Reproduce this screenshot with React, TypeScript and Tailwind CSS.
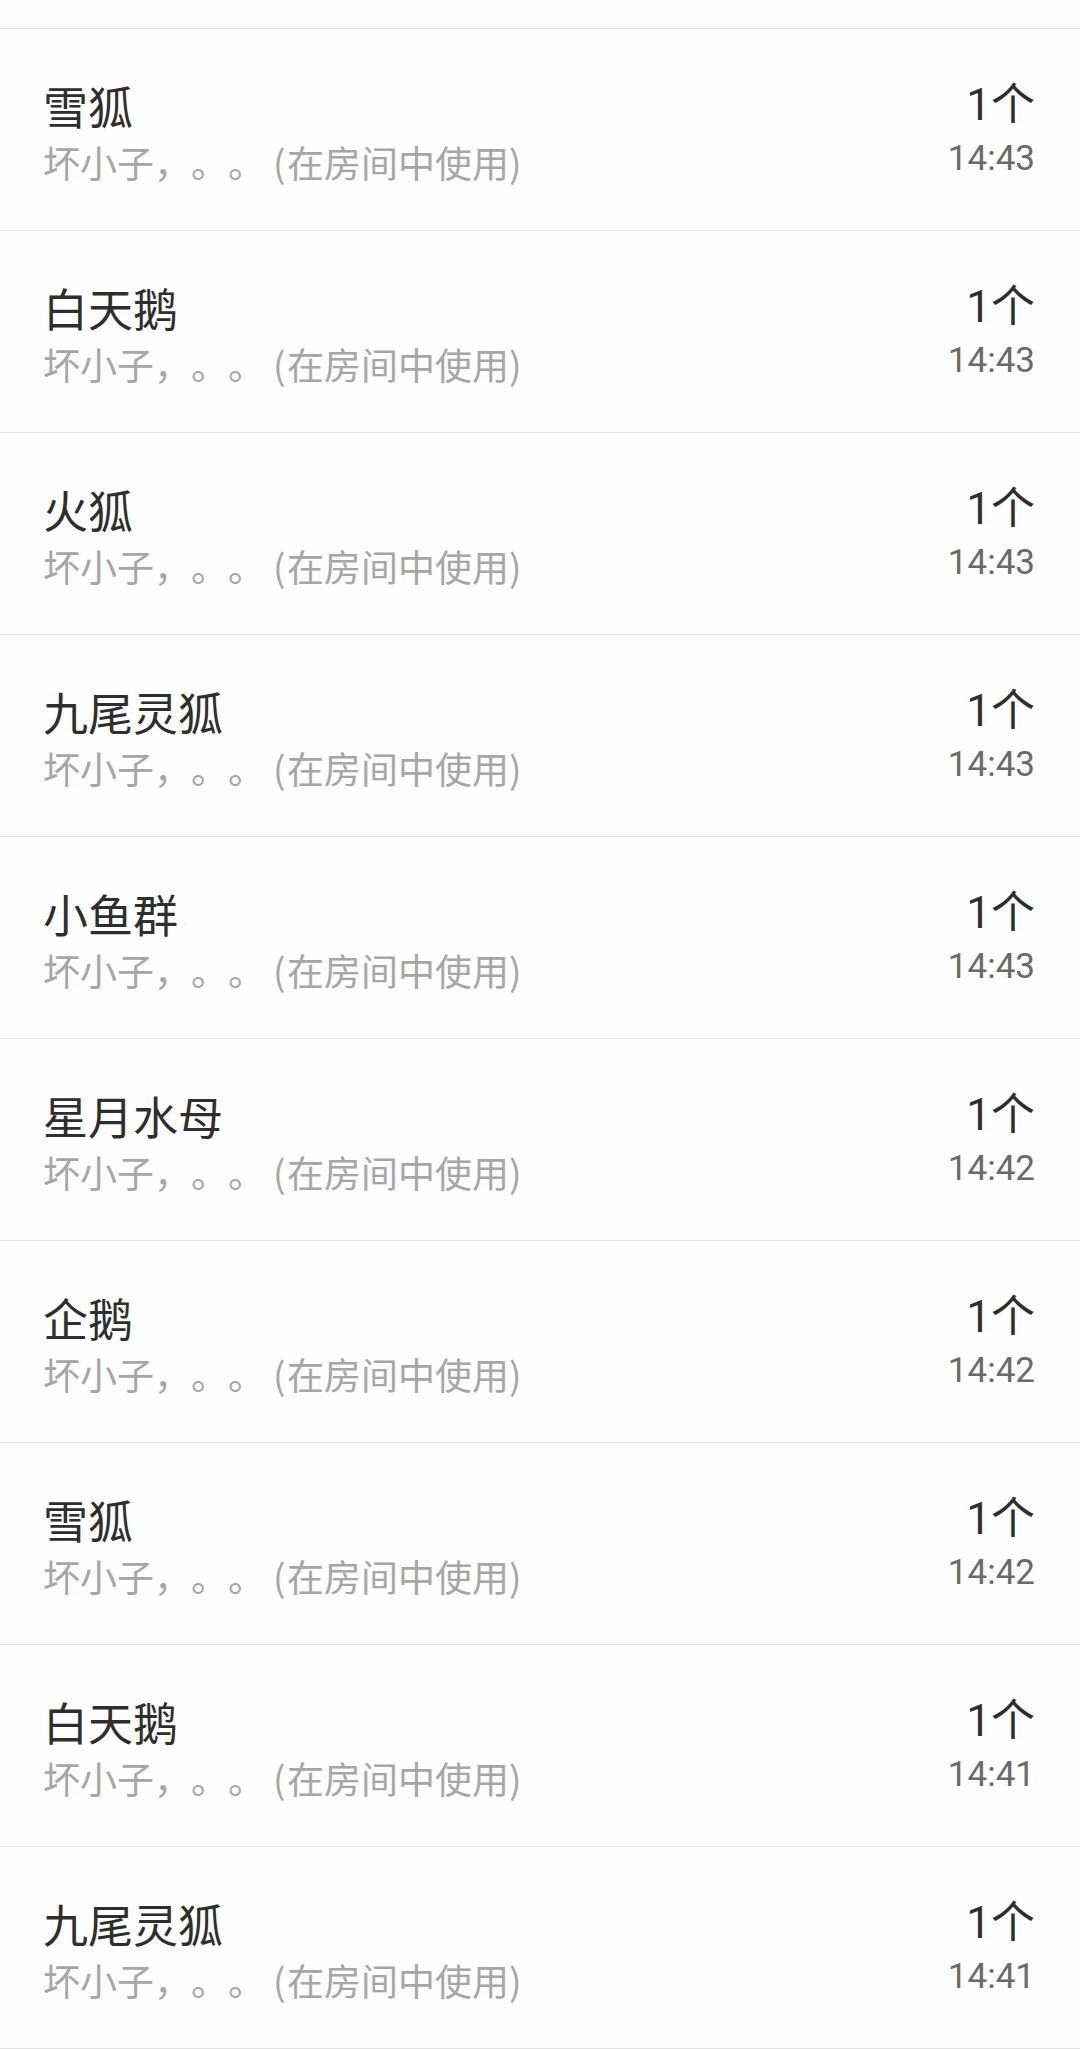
import React from "react";

const rows = [
  { name: "雪狐", time: "14:43" },
  { name: "白天鹅", time: "14:43" },
  { name: "火狐", time: "14:43" },
  { name: "九尾灵狐", time: "14:43" },
  { name: "小鱼群", time: "14:43" },
  { name: "星月水母", time: "14:42" },
  { name: "企鹅", time: "14:42" },
  { name: "雪狐", time: "14:42" },
  { name: "白天鹅", time: "14:41" },
  { name: "九尾灵狐", time: "14:41" },
];

export default function App() {
  return (
    <div
      className="w-[1080px] bg-[#fefefe] pt-[28px] [text-spacing-trim:space-all]"
      style={{ fontFamily: "Roboto, 'Noto Sans CJK SC', sans-serif" }}
    >
      {rows.map((r, i) => (
        <div
          key={i}
          className="flex h-[202px] items-center justify-between border-t border-[#e2e2e2] pl-[43px] pr-[45px] pt-[8px]"
        >
          <div className="flex flex-col">
            <div
              className="text-[45px] leading-[57px] text-[#2e2e2e]"
              style={{ fontFamily: "'Noto Sans CJK SC', sans-serif" }}
            >
              {r.name}
            </div>
            <div
              className="whitespace-nowrap text-[37px] leading-[57px] text-[#a6a6a6]"
              style={{ fontFamily: "'Noto Sans CJK SC', sans-serif" }}
            >
              坏小子
              <span className="inline-block w-[37px]">，</span>
              <span className="inline-block w-[37px]">。</span>
              <span className="inline-block w-[37px]">。</span>
              <span className="inline-block w-[22px] pl-[8px]">(</span>
              在房间中使用)
            </div>
          </div>
          <div className="flex flex-col items-end pb-[7px]">
            <div className="text-[44px] leading-[57px] text-[#2e2e2e]">1个</div>
            <div className="text-[35px] leading-[50px] text-[#6a6a6a]">{r.time}</div>
          </div>
        </div>
      ))}
      <div className="h-px bg-[#e2e2e2]" />
    </div>
  );
}
